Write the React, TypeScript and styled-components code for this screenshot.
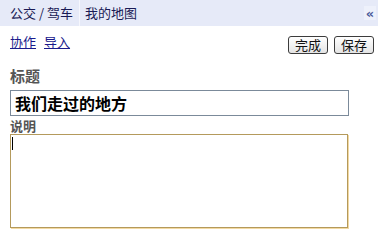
import React from 'react'
import styled, { createGlobalStyle } from 'styled-components'

const GlobalStyle = createGlobalStyle`
  body {
    margin: 0;
    background: #ffffff;
    font-family: "Noto Sans CJK SC", "DejaVu Sans", sans-serif;
  }
`

const Panel = styled.div`
  width: 381px;
  height: 252px;
  background: #ffffff;
`

const Header = styled.div`
  display: flex;
  align-items: center;
  height: 26px;
  width: 378px;
  background: #e6eaf8;
  padding-left: 10px;
  box-sizing: border-box;
`

const NavItem = styled.span`
  font-size: 13px;
  line-height: 26px;
  color: #1a1a55;
`

const NavDivider = styled.span`
  width: 1px;
  height: 26px;
  background: #f6f7fd;
  margin: 0 5px 0 6px;
`

const CollapseButton = styled.span`
  margin-left: auto;
  margin-right: 2px;
  width: 12px;
  height: 14px;
  display: flex;
  align-items: center;
  justify-content: center;
  background: #eef1fb;
  color: #4a5a9a;
  font-size: 13px;
  font-weight: bold;
  line-height: 1;
  font-family: "DejaVu Sans", sans-serif;
`

const Toolbar = styled.div`
  display: flex;
  justify-content: space-between;
  align-items: flex-start;
  padding: 7px 7px 0 10px;
  height: 29px;
`

const Links = styled.div`
  display: flex;
  gap: 8px;
`

const ActionLink = styled.a`
  font-size: 13px;
  line-height: 18px;
  color: #1a1a8c;
  text-decoration: underline;
  cursor: pointer;
`

const Buttons = styled.div`
  display: flex;
  gap: 6px;
  margin-top: 3px;
`

const Button = styled.button`
  width: 40px;
  height: 18px;
  padding: 0;
  font-family: inherit;
  font-size: 13px;
  line-height: 16px;
  color: #111111;
  background: linear-gradient(#ffffff, #e4e4e4);
  border: 1px solid #3c3c3c;
  border-radius: 3px;
`

const Form = styled.div`
  display: flex;
  flex-direction: column;
  padding: 4px 0 0 10px;
`

const Label = styled.label<{ $size: number; $offset?: number }>`
  margin-top: ${(p) => p.$offset ?? 0}px;
  font-size: ${(p) => p.$size}px;
  font-weight: bold;
  color: #555555;
  line-height: ${(p) => p.$size + 4}px;
`

const TitleInput = styled.input`
  margin-top: 5px;
  width: 339px;
  height: 26px;
  box-sizing: border-box;
  border: 1px solid #7b8a9a;
  padding: 0 4px;
  font-family: inherit;
  font-size: 16px;
  font-weight: bold;
  color: #000000;
  outline: none;
`

const DescriptionArea = styled.div`
  width: 338px;
  height: 94px;
  box-sizing: border-box;
  border: 1px solid #b49a5c;
  box-shadow: 1px 1px 0 #f3d9a2;
  position: relative;
`

const Caret = styled.span`
  position: absolute;
  left: 1px;
  top: 2px;
  width: 1px;
  height: 13px;
  background: #000000;
`

export default function App() {
  return (
    <>
      <GlobalStyle />
      <Panel>
        <Header>
          <NavItem>公交 / 驾车</NavItem>
          <NavDivider />
          <NavItem>我的地图</NavItem>
          <CollapseButton>«</CollapseButton>
        </Header>
        <Toolbar>
          <Links>
            <ActionLink>协作</ActionLink>
            <ActionLink>导入</ActionLink>
          </Links>
          <Buttons>
            <Button>完成</Button>
            <Button>保存</Button>
          </Buttons>
        </Toolbar>
        <Form>
          <Label $size={15}>标题</Label>
          <TitleInput defaultValue="我们走过的地方" />
          <Label $size={13} $offset={1}>说明</Label>
          <DescriptionArea>
            <Caret />
          </DescriptionArea>
        </Form>
      </Panel>
    </>
  )
}
